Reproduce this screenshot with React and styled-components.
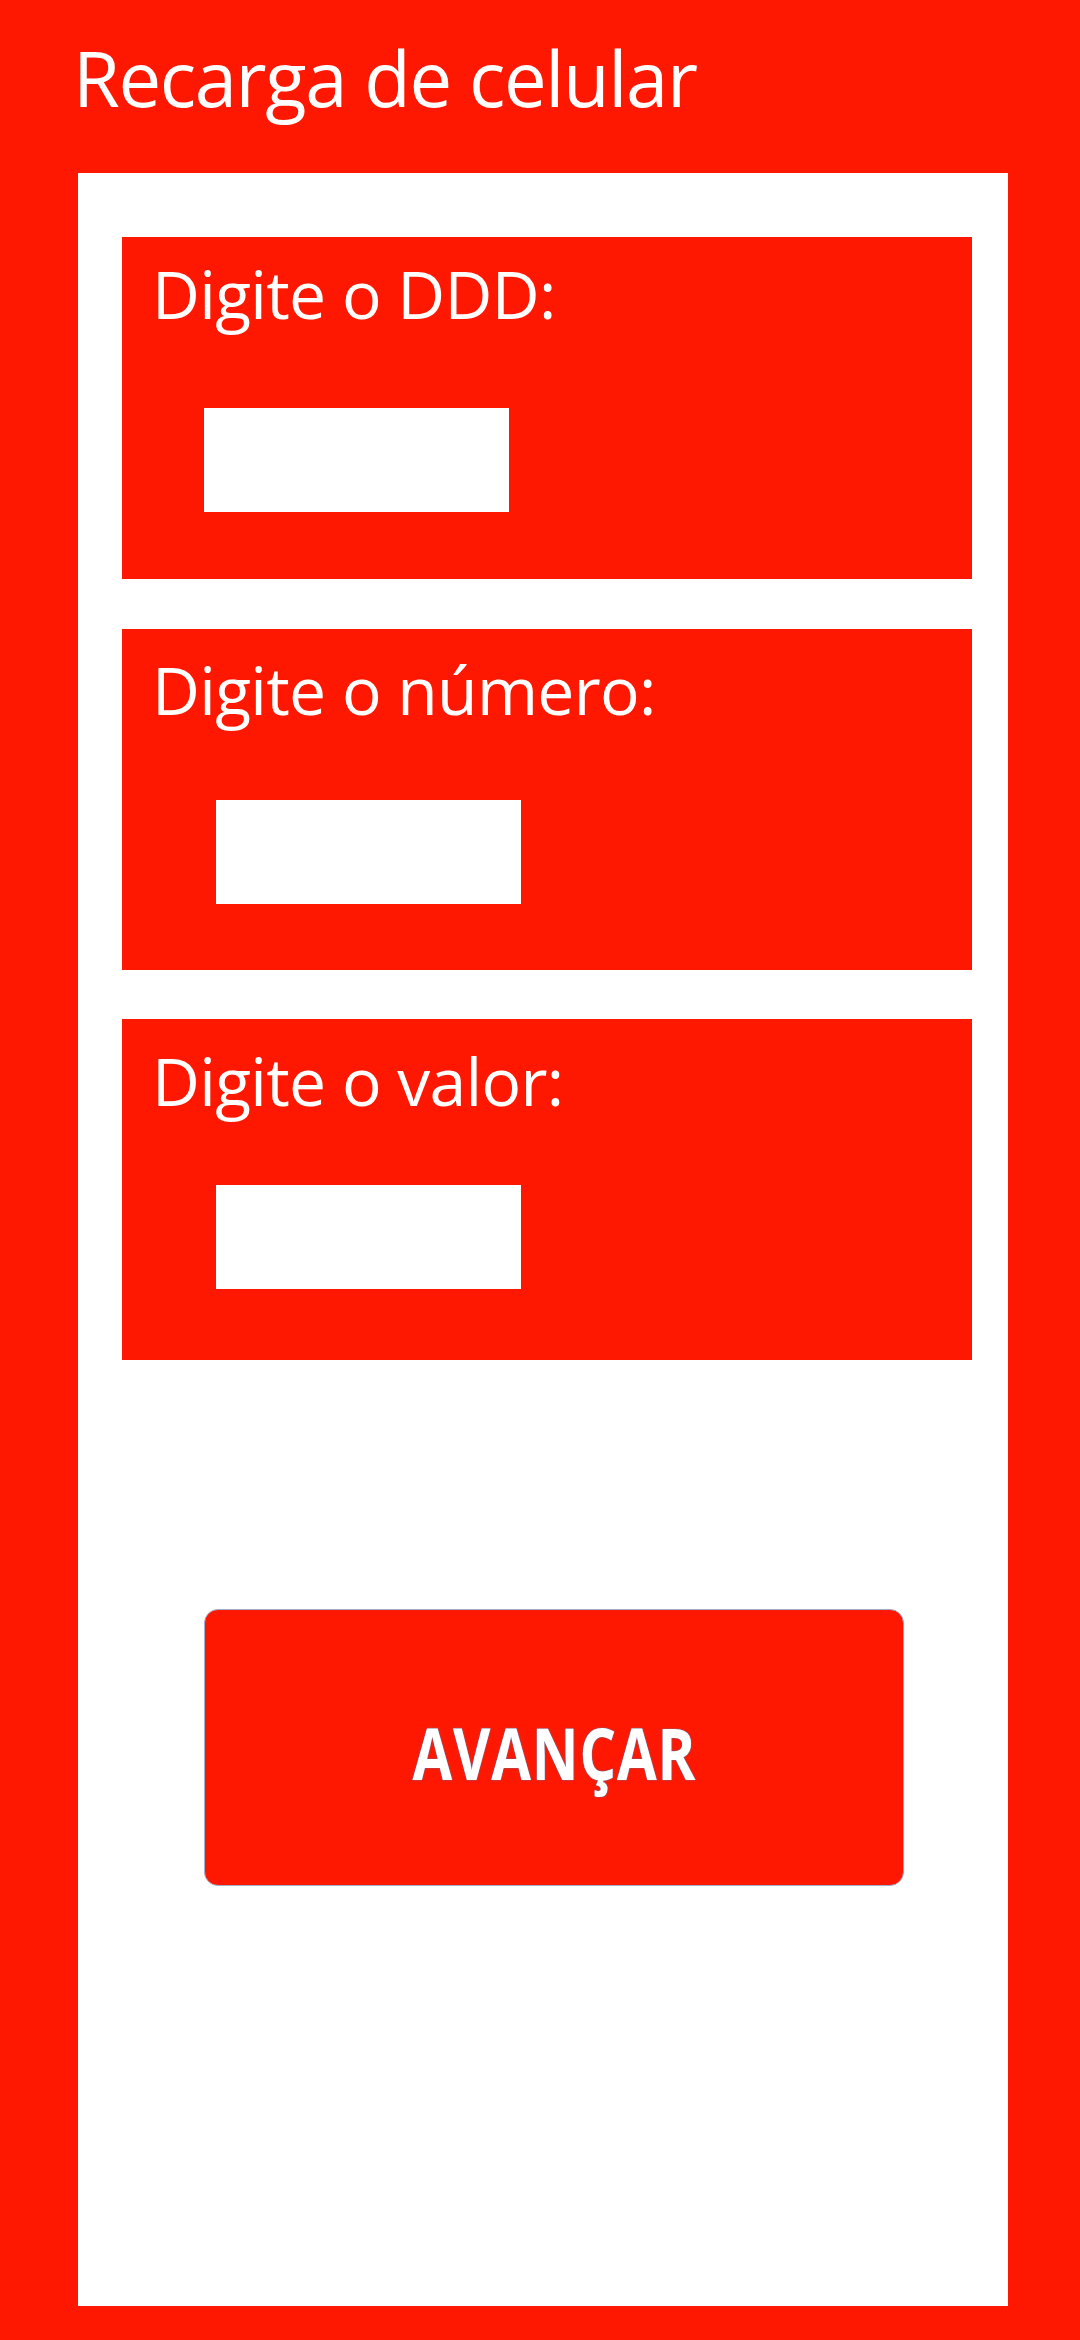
import React from "react";
import styled, { createGlobalStyle } from "styled-components";

const RED = "#ff1801";

const Global = createGlobalStyle`
  html, body { margin: 0; padding: 0; background: ${RED}; }
  body { font-family: "Open Sans", "Noto Sans", sans-serif; }
  * { box-sizing: border-box; }
`;

const Page = styled.div`
  width: 1080px;
  min-height: 2340px;
  background: ${RED};
  display: flex;
  flex-direction: column;
  padding: 40px 72px 34px 78px;
`;

const Title = styled.h1`
  margin: 0 0 57px -5px;
  font-family: "Open Sans", "Noto Sans", sans-serif;
  font-weight: 400;
  font-size: 76px;
  line-height: 76px;
  letter-spacing: -1.4px;
  color: #ffffff;
  white-space: nowrap;
`;

const Panel = styled.main`
  background: #ffffff;
  height: 2133px;
  display: flex;
  flex-direction: column;
  padding: 64px 36px 0 44px;
`;

const Card = styled.section`
  background: ${RED};
  height: ${(p) => p.$h}px;
  margin-bottom: ${(p) => p.$gap}px;
  padding-top: ${(p) => p.$labelTop}px;
  padding-left: 30px;
  display: flex;
  flex-direction: column;
  align-items: flex-start;
`;

const Label = styled.label`
  font-family: "Open Sans", "Noto Sans", sans-serif;
  font-weight: 400;
  font-size: 66px;
  line-height: 66px;
  letter-spacing: -0.7px;
  color: #ffffff;
  white-space: nowrap;
`;

const Field = styled.input`
  margin-top: ${(p) => p.$top}px;
  margin-left: ${(p) => p.$indent}px;
  width: 305px;
  height: 104px;
  border: none;
  outline: none;
  background: #ffffff;
  padding: 0 12px;
  font-size: 40px;
`;

const Actions = styled.div`
  padding-top: 249px;
  padding-left: 82px;
`;

const Button = styled.button`
  width: 700px;
  height: 277px;
  background: ${RED};
  border: 1.5px solid #9fb0c8;
  border-radius: 14px;
  display: flex;
  align-items: center;
  justify-content: center;
  cursor: pointer;
  padding: 0;
`;

const ButtonText = styled.span`
  display: inline-block;
  font-family: "Open Sans", "DejaVu Sans", sans-serif;
  font-weight: 700;
  font-size: 72px;
  line-height: 1;
  color: #ffffff;
  letter-spacing: 1px;
  transform: scaleX(0.8);
  text-shadow: 0 0 2px #5a76a8, 0 0 1px #5a76a8;
  margin-top: 8px;
`;

const fields = [
  { label: "Digite o DDD:", h: 342, gap: 50, labelTop: 23, top: 82, indent: 52 },
  { label: "Digite o número:", h: 341, gap: 49, labelTop: 27, top: 78, indent: 64 },
  { label: "Digite o valor:", h: 341, gap: 0, labelTop: 28, top: 72, indent: 64 },
];

export default function App() {
  return (
    <>
      <Global />
      <Page>
        <Title>Recarga de celular</Title>
        <Panel>
          {fields.map((f) => (
            <Card key={f.label} $h={f.h} $gap={f.gap} $labelTop={f.labelTop}>
              <Label>{f.label}</Label>
              <Field $top={f.top} $indent={f.indent} type="text" />
            </Card>
          ))}
          <Actions>
            <Button type="button">
              <ButtonText>AVANÇAR</ButtonText>
            </Button>
          </Actions>
        </Panel>
      </Page>
    </>
  );
}
